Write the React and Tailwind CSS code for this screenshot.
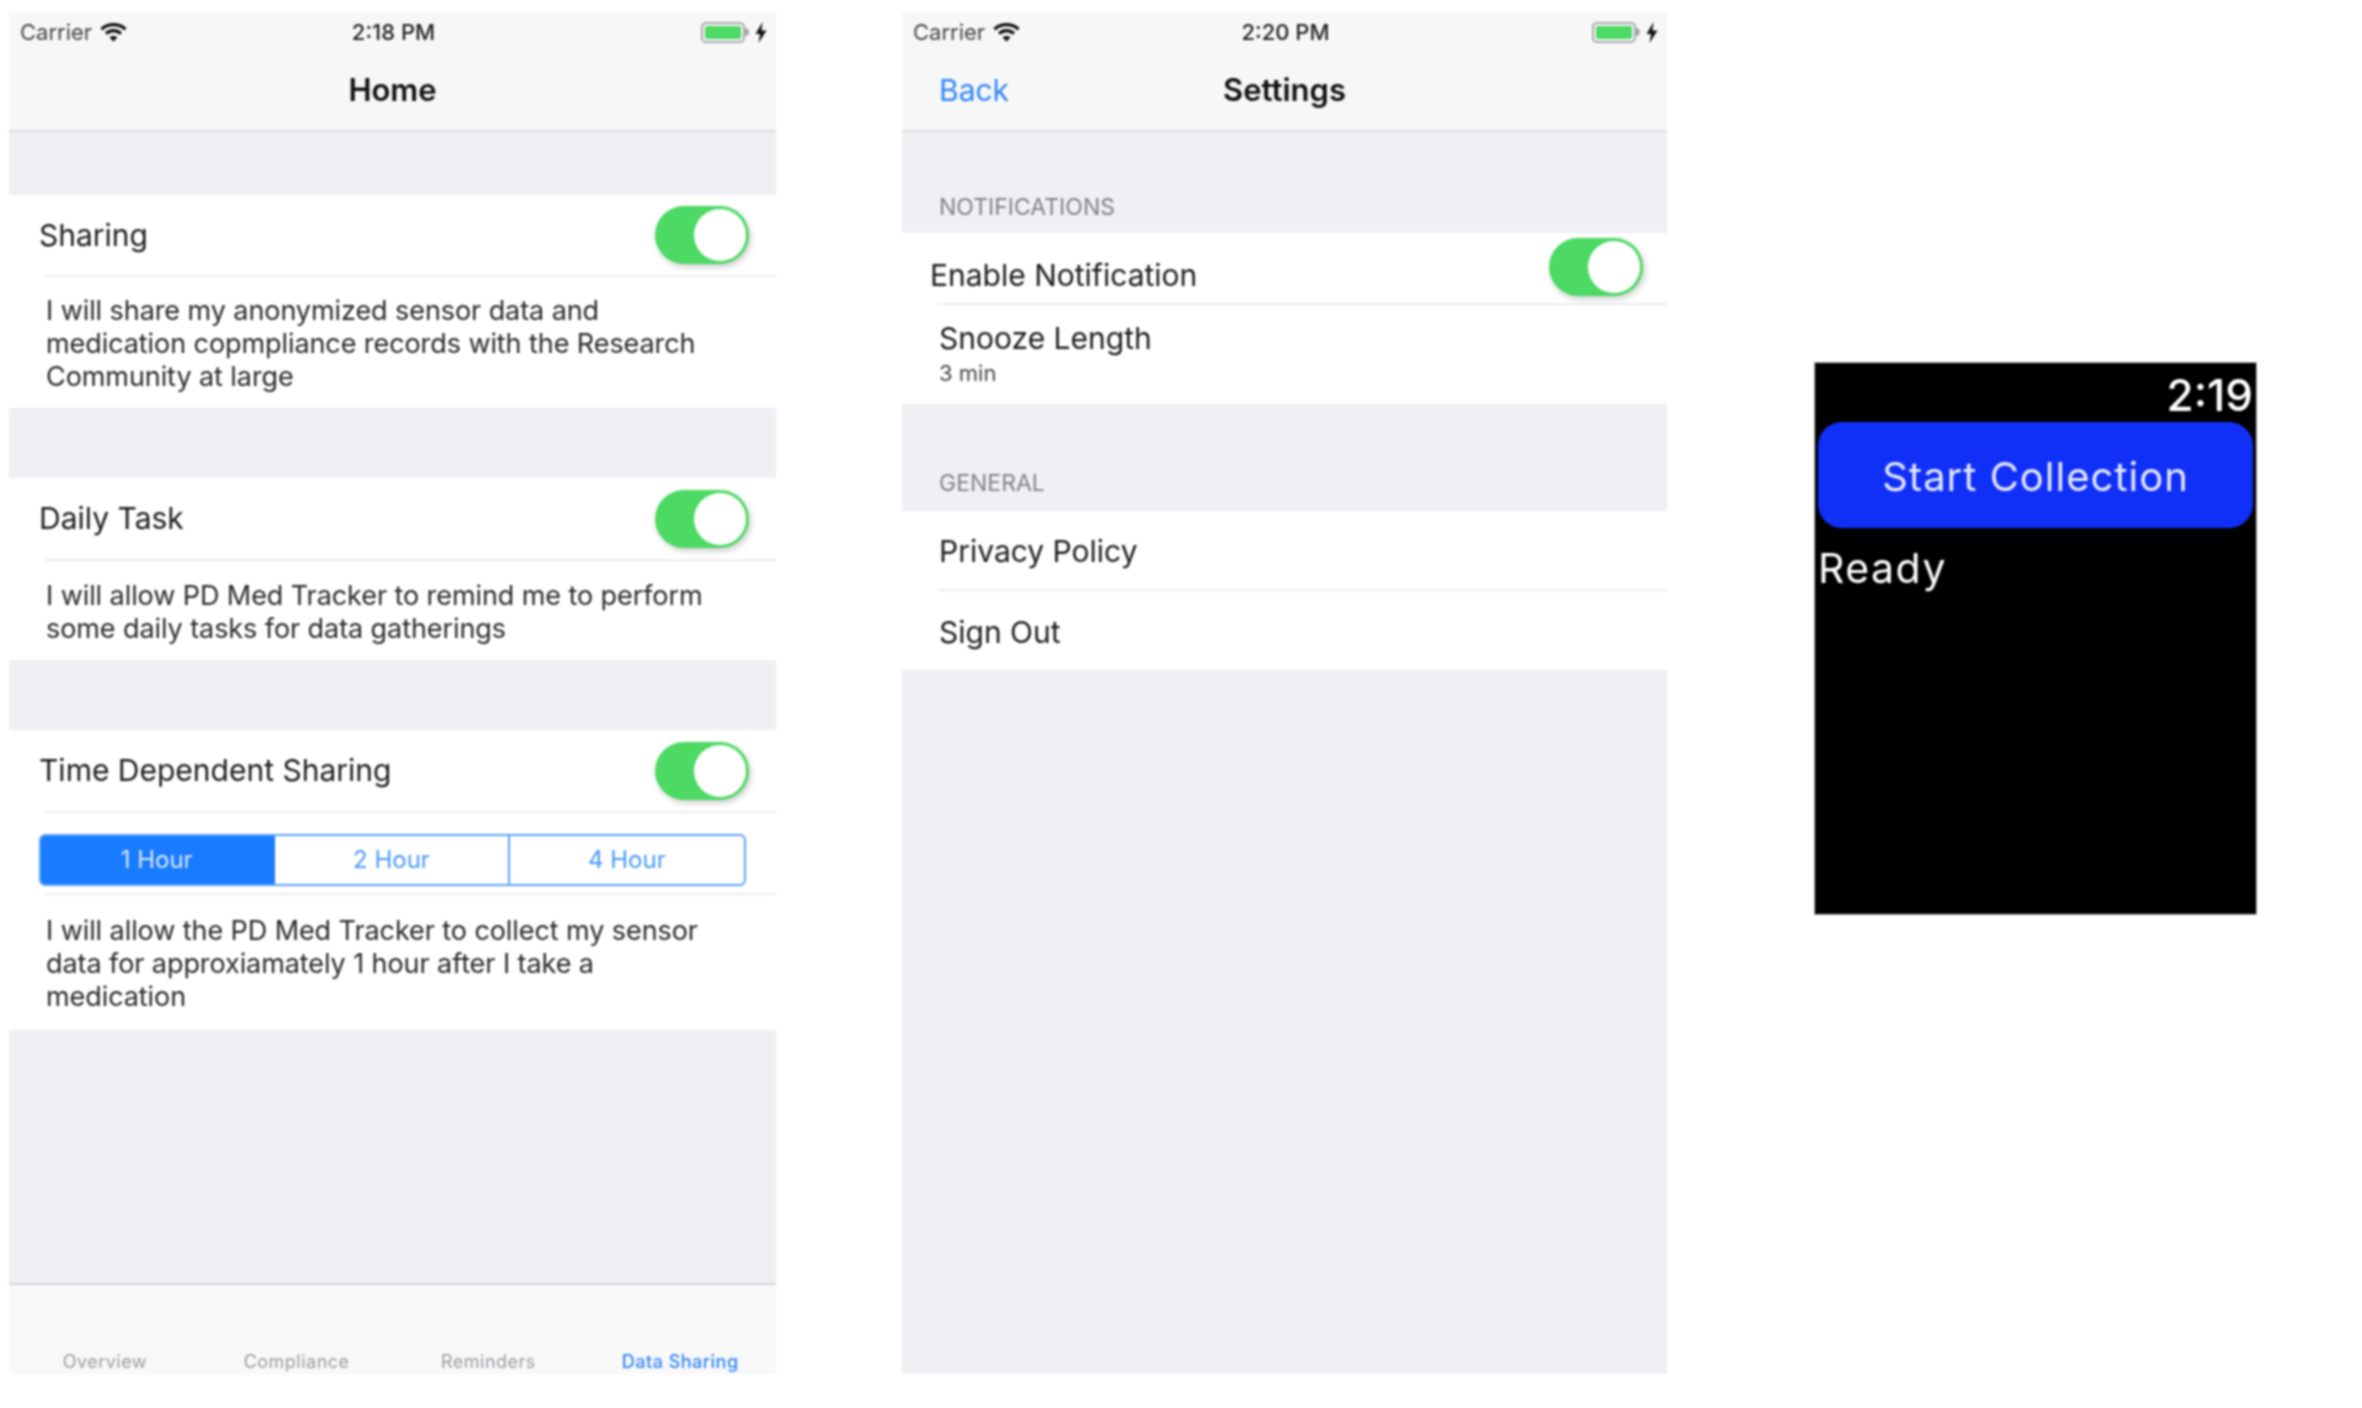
import React from 'react';

const Wifi = () => (
  <svg width="27" height="19" viewBox="0 0 27 19" fill="none" stroke="#111" strokeWidth="3.2">
    <path d="M1.5 6.2C8 0.2 19 0.2 25.5 6.2" />
    <path d="M6 10.6C10.4 6.6 16.6 6.6 21 10.6" />
    <path d="M13.5 18.5L9.6 14.4C11.8 12.6 15.2 12.6 17.4 14.4Z" fill="#111" stroke="none" />
  </svg>
);

const Battery = () => (
  <div className="flex items-center gap-[6px]">
    <div className="flex items-center">
      <div className="w-[44px] h-[21px] rounded-[5px] border-2 border-[#a9a9ad] p-[2px]">
        <div className="w-full h-full rounded-[2px] bg-[#4cd964]" />
      </div>
      <div className="w-[4px] h-[8px] rounded-r-sm bg-[#a9a9ad]" />
    </div>
    <svg width="12" height="21" viewBox="0 0 12 21" fill="#111">
      <path d="M7.5 0L0.5 12H5L3.5 21L11.5 8.5H6.5Z" />
    </svg>
  </div>
);

const StatusBar = ({ time }) => (
  <div className="h-[38px] pt-[2px] pl-[11px] pr-[9px] grid grid-cols-3 items-center text-[22px] text-[#222]">
    <div className="flex items-center gap-[8px]">
      <span className="text-[#444]">Carrier</span>
      <Wifi />
    </div>
    <div className="text-center font-medium">{time}</div>
    <div className="flex justify-end"><Battery /></div>
  </div>
);

const NavBar = ({ title, back, time }) => (
  <div className="h-[120px] bg-[#f7f7f8] border-b-2 border-[#dcdce0]">
    <StatusBar time={time} />
    <div className="relative h-[79px] pt-[2px] flex items-center justify-center">
      {back && <span className="absolute left-[37px] text-[30px] text-[#2f86f6]">{back}</span>}
      <span className="text-[31px] font-semibold text-[#111]">{title}</span>
    </div>
  </div>
);

const Toggle = () => (
  <div className="w-[94px] h-[58px] rounded-full bg-[#4cd964] p-[3px] flex justify-end shadow-[2px_3px_6px_rgba(0,0,0,0.2)]">
    <div className="w-[52px] h-[52px] rounded-full bg-white" />
  </div>
);

const Separator = () => <div className="ml-[36px] h-[2px] bg-[#ececee]" />;

const ToggleRow = ({ label, height }) => (
  <div className={`flex items-center justify-between pl-[30px] pr-[27px] ${height}`}>
    <span className="text-[30px] text-[#1c1c1e]">{label}</span>
    <Toggle />
  </div>
);

const Blurb = ({ lines, padding }) => (
  <div className={`pl-[37px] text-[27px] leading-[33px] tracking-[-0.08px] text-[#2a2a2c] ${padding}`}>
    {lines.map((l) => <div key={l}>{l}</div>)}
  </div>
);

const Segment = () => (
  <div className="mx-[30px] my-[21px] h-[52px] grid grid-cols-3 rounded-[6px] border-2 border-[#5ba0f8] text-[24px] text-[#4a97f8] overflow-hidden">
    <div className="flex items-center justify-center pr-[3px] bg-[#197bff] text-[#d8e8ff]">1 Hour</div>
    <div className="flex items-center justify-center border-r-2 border-[#5ba0f8]">2 Hour</div>
    <div className="flex items-center justify-center">4 Hour</div>
  </div>
);

const TabBar = () => (
  <div className="h-[91px] bg-[#f8f8f9] border-t-2 border-[#d3d3d6] grid grid-cols-4 items-end pb-[2px] text-[18px] tracking-[0.5px] text-[#9b9b9f] text-center">
    <span className="h-[24px]">Overview</span>
    <span className="h-[24px]">Compliance</span>
    <span className="h-[24px]">Reminders</span>
    <span className="h-[24px] font-medium text-[#2f86f6]">Data Sharing</span>
  </div>
);

const HomePhone = () => (
  <div className="w-[767px] h-[1362px] ml-[9px] mt-[12px] flex flex-col bg-[#efeff4]">
    <NavBar title="Home" time="2:18 PM" />
    <div className="h-[63px]" />
    <div className="bg-white h-[213px]">
      <ToggleRow label="Sharing" height="h-[80px]" />
      <Separator />
      <Blurb
        padding="pt-[17px]"
        lines={[
          'I will share my anonymized sensor data and',
          'medication copmpliance records with the Research',
          'Community at large',
        ]}
      />
    </div>
    <div className="h-[70px]" />
    <div className="bg-white h-[182px]">
      <ToggleRow label="Daily Task" height="h-[81px]" />
      <Separator />
      <Blurb
        padding="pt-[18px]"
        lines={[
          'I will allow PD Med Tracker to remind me to perform',
          'some daily tasks for data gatherings',
        ]}
      />
    </div>
    <div className="h-[70px]" />
    <div className="bg-white h-[300px]">
      <ToggleRow label="Time Dependent Sharing" height="h-[81px]" />
      <Separator />
      <Segment />
      <div className="-mt-[14px]"><Separator /></div>
      <Blurb
        padding="pt-[19px]"
        lines={[
          'I will allow the PD Med Tracker to collect my sensor',
          'data for approxiamately 1 hour after I take a',
          'medication',
        ]}
      />
    </div>
    <div className="flex-1" />
    <TabBar />
  </div>
);

const SectionHead = ({ label, height, padding }) => (
  <div className={`flex items-end pl-[37px] text-[23px] text-[#808085] ${height} ${padding}`}>{label}</div>
);

const SettingsPhone = () => (
  <div className="w-[765px] h-[1362px] ml-[126px] mt-[12px] flex flex-col bg-[#efeff4]">
    <NavBar title="Settings" back="Back" time="2:20 PM" />
    <SectionHead label="NOTIFICATIONS" height="h-[101px]" padding="pb-[9px]" />
    <div className="bg-white h-[171px]">
      <div className="relative h-[70px] pl-[28px] pt-[24px] text-[30px] leading-[36px] text-[#1c1c1e]">
        Enable Notification
        <div className="absolute right-[24px] top-[5px]"><Toggle /></div>
      </div>
      <Separator />
      <div className="pl-[37px] pt-[15px]">
        <div className="text-[30px] leading-[36px] text-[#1c1c1e]">Snooze Length</div>
        <div className="text-[22px] leading-[30px] mt-[2px] text-[#444]">3 min</div>
      </div>
    </div>
    <SectionHead label="GENERAL" height="h-[107px]" padding="pb-[11px]" />
    <div className="bg-white h-[159px] text-[30px] text-[#1c1c1e]">
      <div className="h-[78px] flex items-center pl-[37px] pt-[2px]">Privacy Policy</div>
      <Separator />
      <div className="h-[79px] flex items-center pl-[37px] pt-[4px]">Sign Out</div>
    </div>
  </div>
);

const Watch = () => (
  <div className="w-[443px] h-[553px] ml-[147px] mt-[362px] bg-black border border-[#b5b5b5] text-white px-[3px] flex flex-col">
    <div className="h-[59px] flex items-end justify-end pb-[2px] text-[44px] leading-[50px] font-medium">2:19</div>
    <div className="h-[106px] pt-[3px] rounded-[24px] bg-[#1030f8] flex items-center justify-center text-[40px] tracking-[1px] text-[#e6e9ff]">
      Start Collection
    </div>
    <div className="mt-[16px] text-[41px] leading-[48px] tracking-[1.5px]">Ready</div>
  </div>
);

export default function App() {
  return (
    <div className="w-[2362px] h-[1408px] bg-white flex items-start font-['Inter',sans-serif] blur-[0.8px]">
      <HomePhone />
      <SettingsPhone />
      <Watch />
    </div>
  );
}
